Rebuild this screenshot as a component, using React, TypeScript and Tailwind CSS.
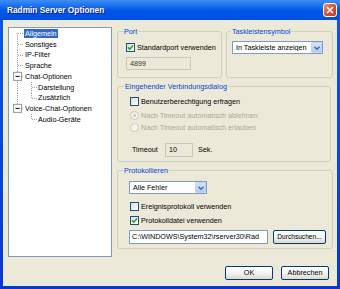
import React from "react";

const H = 10.75;
const C = H / 2;

type Row = { label: string; level: 0 | 1; sel?: boolean; box?: boolean; first?: boolean; lastRoot?: boolean; last?: boolean; parentLast?: boolean };

const rows: Row[] = [
  { label: "Allgemein", level: 0, sel: true, first: true },
  { label: "Sonstiges", level: 0 },
  { label: "IP-Filter", level: 0 },
  { label: "Sprache", level: 0 },
  { label: "Chat-Optionen", level: 0, box: true },
  { label: "Darstellung", level: 1 },
  { label: "Zusätzlich", level: 1, last: true },
  { label: "Voice-Chat-Optionen", level: 0, box: true, lastRoot: true },
  { label: "Audio-Geräte", level: 1, last: true, parentLast: true },
];

const dot = { stroke: "#a0a0a0", strokeWidth: 1, strokeDasharray: "1 1" };

function TreeRow({ r }: { r: Row }) {
  const w = r.level === 0 ? 15 : 28;
  return (
    <div className="flex items-center h-[10.75px]">
      <svg width={w} height={H} className="shrink-0">
        {r.level === 0 && (
          <>
            <line x1="8.5" y1={r.first ? C : 0} x2="8.5" y2={r.lastRoot ? C : H} {...dot} />
            <line x1="9" y1={C} x2="15" y2={C} {...dot} />
            {r.box && (
              <>
                <rect x="4.5" y={C - 4} width="8" height="8" fill="#fff" stroke="#919b9c" />
                <line x1="6.5" y1={C} x2="10.5" y2={C} stroke="#000" />
              </>
            )}
          </>
        )}
        {r.level === 1 && (
          <>
            {!r.parentLast && <line x1="8.5" y1="0" x2="8.5" y2={H} {...dot} />}
            <line x1="22.5" y1="0" x2="22.5" y2={r.last ? C : H} {...dot} />
            <line x1="23" y1={C} x2="28" y2={C} {...dot} />
          </>
        )}
      </svg>
      <span className={`px-[1px] leading-[9px] ${r.sel ? "bg-[#316ac5] text-white" : ""}`}>{r.label}</span>
    </div>
  );
}

function Check({ checked }: { checked?: boolean }) {
  return (
    <span className="w-[9px] h-[9px] border border-[#1c5180] bg-gradient-to-br from-[#dcdcd7] to-white flex items-center justify-center shrink-0">
      {checked && (
        <svg width="7" height="7" viewBox="0 0 7 7">
          <path d="M1 3.4 L2.8 5.2 L6 1.4" stroke="#21a121" strokeWidth="1.5" fill="none" />
        </svg>
      )}
    </span>
  );
}

function Radio({ on }: { on?: boolean }) {
  return (
    <span className="w-[9px] h-[9px] rounded-full border border-[#cac8bb] bg-[#f4f3ee] flex items-center justify-center shrink-0">
      {on && <span className="w-[3px] h-[3px] rounded-full bg-[#cac8bb]" />}
    </span>
  );
}

function Select({ value, w }: { value: string; w: string }) {
  return (
    <div className={`${w} h-[13px] border border-[#7f9db9] bg-white flex items-center`}>
      <span className="flex-1 pl-[3px] whitespace-nowrap overflow-hidden leading-none">{value}</span>
      <span className="w-[11px] h-[11px] rounded-[1px] bg-gradient-to-b from-[#d6e2fd] to-[#b4c8f6] border border-[#c3d3fd] flex items-center justify-center">
        <svg width="6" height="4" viewBox="0 0 6 4">
          <path d="M0.5 0.7 L3 3.2 L5.5 0.7" stroke="#4d6185" strokeWidth="1.3" fill="none" />
        </svg>
      </span>
    </div>
  );
}

function Button({ children, w }: { children: React.ReactNode; w: string }) {
  return (
    <div className={`${w} h-[14px] rounded-[2px] border border-[#003c74] bg-gradient-to-b from-white via-[#f4f4f0] to-[#dcdad0] flex items-center justify-center leading-none whitespace-nowrap`}>
      {children}
    </div>
  );
}

function Legend({ children, ml }: { children: React.ReactNode; ml: string }) {
  return <legend className={`${ml} px-[1px] text-[#0046d5] leading-[9px]`}>{children}</legend>;
}

export default function App() {
  return (
    <div className="w-[340px] h-[289px] flex flex-col bg-gradient-to-b from-[#0a5ae6] to-[#0838d0] overflow-hidden font-['Liberation_Sans',Arial,sans-serif] text-[7.2px] text-black">
      {/* Title bar */}
      <div className="h-[20px] flex items-center pl-[7px] pr-[3px] bg-gradient-to-b from-[#3d8ef5] via-[#0058e8] to-[#0050e0]">
        <span className="text-white font-bold text-[8.3px] leading-none [text-shadow:1px_1px_#0f1089]">Radmin Server Optionen</span>
        <div className="ml-auto w-[14px] h-[14px] rounded-[3px] border border-white bg-gradient-to-br from-[#e9906c] via-[#d9532c] to-[#c03b1a] flex items-center justify-center">
          <svg width="8" height="8" viewBox="0 0 8 8">
            <path d="M1 1 L7 7 M7 1 L1 7" stroke="#fff" strokeWidth="1.6" />
          </svg>
        </div>
      </div>

      {/* Body */}
      <div className="flex-1 mx-[3px] mb-[3px] bg-[#ece9d8] pt-[7px] pl-[5px] pr-[4px] flex flex-col">
        <div className="flex h-[230px] gap-[5px]">
          {/* Tree */}
          <div className="w-[104px] h-full border border-[#7f9db9] bg-white">
            {rows.map((r) => (
              <TreeRow key={r.label} r={r} />
            ))}
          </div>

          {/* Right side */}
          <div className="w-[216px] flex flex-col">
            <div className="flex gap-[4px]">
              <fieldset className="w-[105px] h-[51px] border border-[#d0d0bf] rounded-[3px]">
                <Legend ml="ml-[5px]">Port</Legend>
                <div className="pl-[8px]">
                  <div className="mt-[7px] h-[9px] flex items-center gap-[2px]">
                    <Check checked />
                    <span className="leading-none">Standardport verwenden</span>
                  </div>
                  <div className="mt-[5px] w-[65px] h-[13px] border border-[#c9c7ba] bg-[#ece9d8] flex items-center pl-[3px] text-[#333] leading-none">4899</div>
                </div>
              </fieldset>
              <fieldset className="w-[107px] h-[51px] border border-[#d0d0bf] rounded-[3px]">
                <Legend ml="ml-[4px]">Taskleistensymbol</Legend>
                <div className="pl-[5px] pt-[5px]">
                  <Select value="In Taskleiste anzeigen" w="w-[91px]" />
                </div>
              </fieldset>
            </div>

            <fieldset className="mt-[4px] w-[214px] h-[80px] border border-[#d0d0bf] rounded-[3px]">
              <Legend ml="ml-[6px]">Eingehender Verbindungsdialog</Legend>
              <div className="pl-[12px]">
                <div className="mt-[6px] h-[9px] flex items-center gap-[2px]">
                  <Check />
                  <span className="leading-none">Benutzerberechtigung erfragen</span>
                </div>
                <div className="mt-[5px] h-[9px] flex items-center gap-[2px] text-[#aca899]">
                  <Radio on />
                  <span className="leading-none">Nach Timeout automatisch ablehnen</span>
                </div>
                <div className="mt-[3px] h-[9px] flex items-center gap-[2px] text-[#aca899]">
                  <Radio />
                  <span className="leading-none">Nach Timeout automatisch erlauben</span>
                </div>
                <div className="mt-[11px] h-[14px] flex items-center pl-[2px]">
                  <span className="w-[33px] leading-none">Timeout</span>
                  <div className="w-[28px] h-[14px] border border-[#c9c7ba] bg-[#ece9d8] flex items-center pl-[3px] leading-none">10</div>
                  <span className="ml-[5px] leading-none">Sek.</span>
                </div>
              </div>
            </fieldset>

            <fieldset className="mt-[4px] w-[216px] h-[83px] border border-[#d0d0bf] rounded-[3px]">
              <Legend ml="ml-[5px]">Protokollieren</Legend>
              <div className="pl-[11px]">
                <div className="mt-[6px]">
                  <Select value="Alle Fehler" w="w-[78px]" />
                </div>
                <div className="mt-[8px] ml-[1px] h-[9px] flex items-center gap-[2px]">
                  <Check />
                  <span className="leading-none">Ereignisprotokoll verwenden</span>
                </div>
                <div className="mt-[5px] ml-[1px] h-[9px] flex items-center gap-[2px]">
                  <Check checked />
                  <span className="leading-none">Protokolldatei verwenden</span>
                </div>
                <div className="mt-[5px] flex gap-[5px]">
                  <div className="w-[139px] h-[14px] border border-[#7f9db9] bg-white flex items-center pl-[2px] whitespace-nowrap overflow-hidden leading-none">
                    {"C:\\WINDOWS\\System32\\rserver30\\Rad"}
                  </div>
                  <Button w="w-[53px]">
                    <span className="text-[6.6px]">Durchsuchen...</span>
                  </Button>
                </div>
              </div>
            </fieldset>
          </div>
        </div>

        {/* Dialog buttons */}
        <div className="mt-[9px] flex justify-end gap-[8px] pr-[4px]">
          <Button w="w-[48px]">OK</Button>
          <Button w="w-[48px]">Abbrechen</Button>
        </div>
      </div>
    </div>
  );
}
